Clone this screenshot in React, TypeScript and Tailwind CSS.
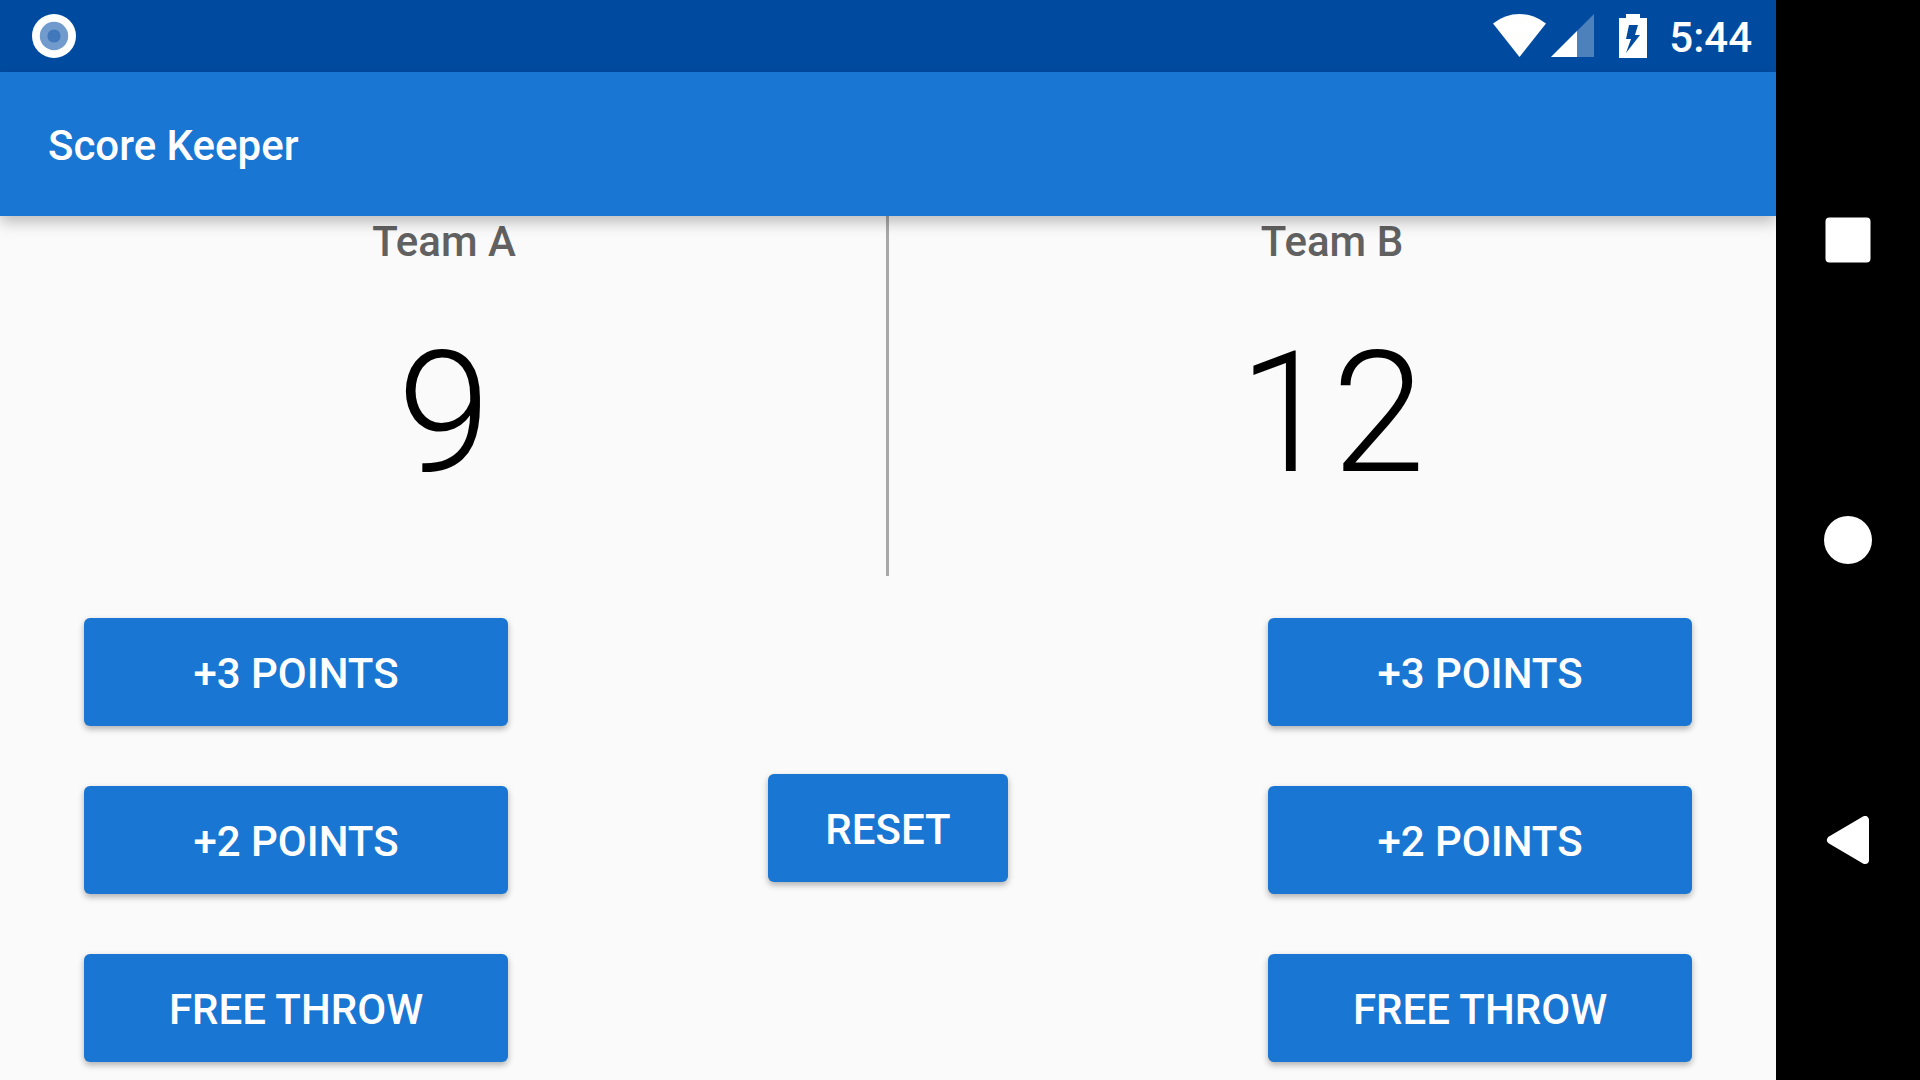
import React from "react";

function RaisedButton({ label }: { label: string }) {
  return (
    <button
      type="button"
      className="h-[108px] w-full rounded-[6px] bg-[#1976d2] pt-1 text-[42px] leading-none font-medium text-white uppercase shadow-[0_3px_6px_rgba(0,0,0,0.3)]"
    >
      {label}
    </button>
  );
}

function TeamScore({ name, score }: { name: string; score: number }) {
  return (
    <section className="flex flex-col items-center">
      <h2 className="text-[42px] leading-13 font-medium text-[#616161]">{name}</h2>
      <p className="mt-12 text-[168px] leading-[196px] font-light text-black">{score}</p>
    </section>
  );
}

function TeamButtons({ team }: { team: string }) {
  return (
    <div role="group" aria-label={team} className="mx-21 flex w-[424px] flex-col gap-15 self-start pt-[42px]">
      <RaisedButton label="+3 Points" />
      <RaisedButton label="+2 Points" />
      <RaisedButton label="Free throw" />
    </div>
  );
}

export default function App() {
  return (
    <div className="flex min-h-screen bg-[#fafafa] font-['Roboto',sans-serif]">
      <div className="flex flex-1 flex-col">
        <div className="flex h-18 items-center bg-[#004ba0] pr-6 pl-8 text-white">
          <svg className="size-11" viewBox="0 0 44 44" aria-hidden="true">
            <circle cx="22" cy="22" r="22" fill="#fff" />
            <circle cx="22" cy="22" r="14.200" fill="#729bcd" />
            <circle cx="22" cy="22" r="6.600" fill="#4078bb" />
          </svg>
          <svg className="ml-auto h-11 w-[154px]" viewBox="0 0 154 44" aria-hidden="true">
            <path d="M0 9.500A42 42 0 0 1 53 9.500L26.500 43Z" fill="#fff" />
            <path d="M101 0V43H58Z" fill="#fff" opacity="0.3" />
            <path d="M84 17V43H58Z" fill="#fff" />
            <path
              fillRule="evenodd"
              d="M133 0H147V4H154V44H126V4H133ZM136 11L133 25H138L133 39L147 21H142L145 11Z"
              fill="#fff"
            />
          </svg>
          <span className="ml-[22px] pt-1 text-[42px] leading-none font-medium">5:44</span>
        </div>
        <header className="z-10 flex h-36 items-center bg-[#1976d2] px-12 pt-1 shadow-[0_6px_14px_rgba(0,0,0,0.25)]">
          <h1 className="text-[42px] leading-none font-medium text-white">Score Keeper</h1>
        </header>
        <main className="flex flex-1 flex-col">
          <div className="relative grid h-90 grid-cols-2">
            <TeamScore name="Team A" score={9} />
            <TeamScore name="Team B" score={12} />
            <div className="absolute inset-y-0 left-1/2 -ml-0.5 w-[3px] bg-[#a8a8a8]" />
          </div>
          <div className="flex flex-1 items-center justify-between">
            <TeamButtons team="Team A" />
            <div className="w-60">
              <RaisedButton label="Reset" />
            </div>
            <TeamButtons team="Team B" />
          </div>
        </main>
      </div>
      <nav aria-label="System" className="flex w-36 flex-col items-center justify-center gap-[252px] bg-black">
        <button type="button" aria-label="Recent apps" className="size-12">
          <svg viewBox="0 0 48 48" aria-hidden="true">
            <rect x="1.500" y="1.500" width="45" height="45" rx="4" fill="#fff" />
          </svg>
        </button>
        <button type="button" aria-label="Home" className="size-12">
          <svg viewBox="0 0 48 48" aria-hidden="true">
            <circle cx="24" cy="24" r="24" fill="#fff" />
          </svg>
        </button>
        <button type="button" aria-label="Back" className="size-12">
          <svg viewBox="0 0 48 48" aria-hidden="true">
            <path d="M7 24L41 4V44Z" fill="#fff" stroke="#fff" strokeWidth="8" strokeLinejoin="round" />
          </svg>
        </button>
      </nav>
    </div>
  );
}
